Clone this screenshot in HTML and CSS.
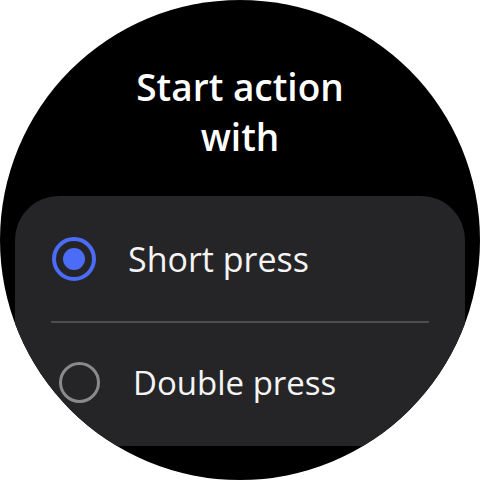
FILE: index.html
```html
<!DOCTYPE html>
<html lang="en">
<head>
<meta charset="UTF-8">
<title>Start action with</title>
<link rel="stylesheet" href="styles.css">
</head>
<body>

<!-- ─── WATCH FACE ──────────────────────────────────────────────────────── -->
<div class="watch">
  <h1 class="title">Start action<br>with</h1>

  <div class="card">
    <!-- selected option -->
    <div class="option checked">
      <span class="radio"></span>
      <span class="label">Short press</span>
    </div>

    <div class="divider"></div>

    <!-- unselected option -->
    <div class="option second">
      <span class="radio"></span>
      <span class="label">Double press</span>
    </div>
  </div>
</div>

</body>
</html>
```

FILE: styles.css
```css
:root{
  --card: #252527;
  --accent: #4a6cf7;     /* selected radio */
  --ring: #8a8a8a;       /* idle radio */
  --rule: #4d4d50;
}
*{ box-sizing:border-box; }

body{
  margin:0;
  background:#fff;
  font-family: "Open Sans", sans-serif;
}

/* the round screen */
.watch{
  width:480px; height:480px;
  border-radius:50%;
  overflow:hidden;
  background:#000;
  display:flex;
  flex-direction:column;
  align-items:center;
}

.title{
  margin:62px 0 0;
  color:#fff;
  font-size:37px;
  font-weight:600;
  line-height:50px;
  text-align:center;
}

/* list card */
.card{
  width:450px;
  margin-top:34px;
  padding:20px 0 21px;
  background:var(--card);
  border-radius:44px 44px 0 0;
}

.option{
  height:86px;
  display:flex;
  align-items:center;
  gap:32px;
  padding-left:37px;
}
.option.second{ padding-left:44px; gap:33px; }

.radio{
  flex:none;
  width:44px; height:44px;
  border-radius:50%;
  border:4px solid var(--accent);
  display:flex;
  align-items:center;
  justify-content:center;
}
.checked .radio::after{
  content:"";
  width:22px; height:22px;
  border-radius:50%;
  background:var(--accent);
}
.second .radio{
  width:41px; height:41px;
  border:3px solid var(--ring);
}

.label{
  color:#f4f4f4;
  font-size:34px;
  line-height:1;
}
.second .label{ font-size:33px; }

.divider{
  height:2px;
  margin:19px 36px 16px;
  background:var(--rule);
}
```
